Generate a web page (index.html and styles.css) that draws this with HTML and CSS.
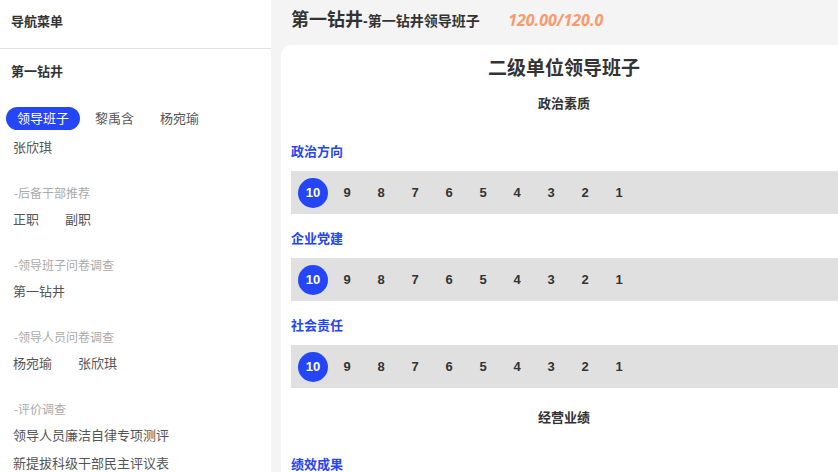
FILE: index.html
```html
<html>
<head>
  <meta charset="utf-8">
  <link rel="stylesheet" href="styles.css">
</head>
<body>
<div class="wrap">
  <div class="side">
    <div class="nav_title">导航菜单</div>
    <div class="unit">第一钻井</div>
    <div class="pills">
      <span class="pill active">领导班子</span>
      <span class="pill">黎禹含</span>
      <span class="pill">杨宛瑜</span>
      <span class="pill">张欣琪</span>
    </div>
    <div class="group">
      <div class="group_title">-后备干部推荐</div>
      <div class="items">
        <span>正职</span>
        <span>副职</span>
      </div>
    </div>
    <div class="group">
      <div class="group_title">-领导班子问卷调查</div>
      <div class="items">
        <span>第一钻井</span>
      </div>
    </div>
    <div class="group">
      <div class="group_title">-领导人员问卷调查</div>
      <div class="items">
        <span>杨宛瑜</span>
        <span>张欣琪</span>
      </div>
    </div>
    <div class="group">
      <div class="group_title">-评价调查</div>
      <div class="items list">
        <span>领导人员廉洁自律专项测评</span>
        <span>新提拔科级干部民主评议表</span>
      </div>
    </div>
  </div>
  <div class="main">
    <div class="head">
      <span class="head_unit">第一钻井</span><span class="head_sub">-第一钻井领导班子</span>
      <span class="score">120.00/120.0</span>
    </div>
    <div class="card">
      <div class="card_title">二级单位领导班子</div>
      <div class="section">政治素质</div>

      <div class="q_title">政治方向</div>
      <div class="rate">
        <span class="num on">10</span><span class="num">9</span><span class="num">8</span><span class="num">7</span><span class="num">6</span><span class="num">5</span><span class="num">4</span><span class="num">3</span><span class="num">2</span><span class="num">1</span>
      </div>

      <div class="q_title">企业党建</div>
      <div class="rate">
        <span class="num on">10</span><span class="num">9</span><span class="num">8</span><span class="num">7</span><span class="num">6</span><span class="num">5</span><span class="num">4</span><span class="num">3</span><span class="num">2</span><span class="num">1</span>
      </div>

      <div class="q_title">社会责任</div>
      <div class="rate">
        <span class="num on">10</span><span class="num">9</span><span class="num">8</span><span class="num">7</span><span class="num">6</span><span class="num">5</span><span class="num">4</span><span class="num">3</span><span class="num">2</span><span class="num">1</span>
      </div>

      <div class="section section2">经营业绩</div>
      <div class="q_title q_last">绩效成果</div>
    </div>
  </div>
</div>
</body>
</html>
```

FILE: styles.css
```css
body{
  margin: 0;
  font-family: "Liberation Sans", "Noto Sans CJK SC", sans-serif;
  background: #f4f4f4;
  color: #333;
}
.wrap{
  display: flex;
  height: 472px;
  overflow: hidden;
}
.side{
  width: 271px;
  flex: none;
  background: #fff;
  font-size: 13px;
}
.nav_title{
  height: 48px;
  line-height: 44px;
  padding-left: 11px;
  font-weight: bold;
  border-bottom: 1px solid #e2e2e2;
}
.unit{
  margin-top: 13px;
  line-height: 20px;
  padding-left: 11px;
  font-weight: bold;
}
.pills{
  display: flex;
  flex-wrap: wrap;
  gap: 6px 4px;
  margin-top: 25px;
  padding-left: 6px;
}
.pill{
  height: 23px;
  line-height: 23px;
  padding: 0 11px;
  border-radius: 12px;
  color: #555;
}
.pill.active{
  background: #2545f8;
  color: #fff;
}
.pill:last-child{
  padding-left: 7px;
}
.group{
  margin-top: 22px;
  padding-left: 13px;
}
.pills + .group{
  margin-top: 25px;
}
.group_title{
  font-size: 12px;
  line-height: 20px;
  color: #aaa;
  padding-left: 1px;
  margin-bottom: 2px;
}
.items{
  display: flex;
  gap: 26px;
  line-height: 28px;
  color: #555;
}
.items.list{
  flex-direction: column;
  gap: 0;
}
.main{
  flex: 1;
  min-width: 0;
}
.head{
  height: 45px;
  line-height: 40px;
  padding-left: 20px;
  white-space: nowrap;
}
.head_unit{
  font-size: 18px;
  font-weight: bold;
}
.head_sub{
  font-size: 14px;
  font-weight: bold;
}
.score{
  margin-left: 24px;
  font-family: "Open Sans", sans-serif;
  font-size: 16px;
  font-style: italic;
  font-weight: bold;
  color: #fa9a6c;
}
.card{
  margin-left: 10px;
  width: 546px;
  height: 440px;
  padding: 11px 10px 0 10px;
  background: #fff;
  border-radius: 10px 0 0 0;
}
.card_title{
  text-align: center;
  font-size: 19px;
  font-weight: bold;
  line-height: 26px;
}
.section{
  margin-top: 12px;
  text-align: center;
  font-size: 13px;
  font-weight: bold;
  line-height: 20px;
}
.section2{
  margin-top: 20px;
}
.q_title{
  margin-top: 28px;
  font-size: 13px;
  font-weight: bold;
  line-height: 20px;
  color: #2545f8;
}
.rate + .q_title{
  margin-top: 15px;
}
.q_last{
  margin-top: 27px;
}
.rate{
  margin-top: 9px;
  height: 43px;
  margin-right: -20px;
  background: #e0e0e0;
  display: flex;
  align-items: center;
  gap: 4px;
  padding-left: 7px;
}
.num{
  width: 30px;
  height: 30px;
  line-height: 30px;
  text-align: center;
  border-radius: 50%;
  font-size: 13px;
  font-weight: bold;
  color: #333;
}
.num.on{
  background: #2545f8;
  color: #fff;
}
```
